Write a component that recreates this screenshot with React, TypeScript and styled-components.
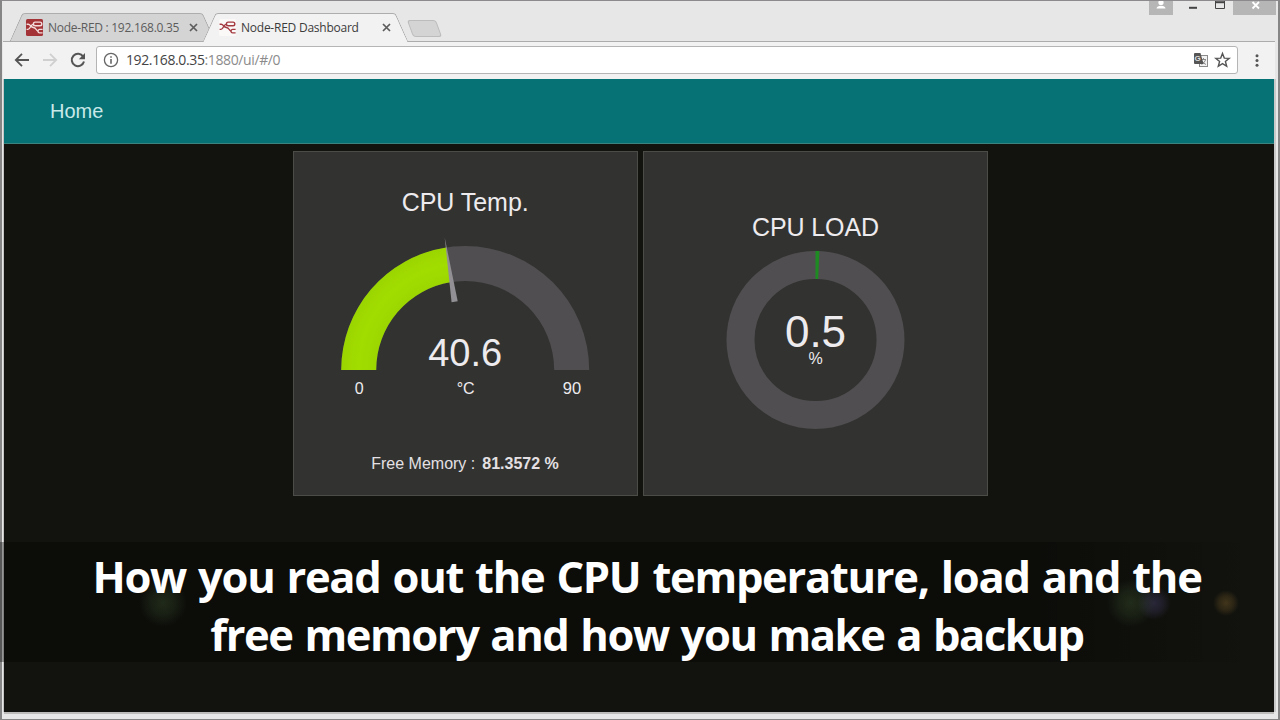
import React, { FC } from "react";
import styled, { createGlobalStyle, css } from "styled-components";

const GlobalStyle = createGlobalStyle`
  * {
    box-sizing: border-box;
  }
  body {
    margin: 0;
    overflow: hidden;
    background: #e7e7e7;
  }
`;

const arial = `"Liberation Sans", Arial, sans-serif`;
const segoe = `"Open Sans", "Segoe UI", sans-serif`;

const Window = styled.div`
  position: relative;
  display: flex;
  flex-direction: column;
  width: 1280px;
  height: 720px;
  background: #e7e7e7;
  border-top: 1px solid #8c8a8c;
  border-bottom: 1px solid #858585;
  border-left: 2px solid #858585;
  border-right: 2px solid #858585;
  font-family: ${segoe};
`;

const TitleBar = styled.div`
  display: flex;
  height: 40px;
  flex: none;
  padding-left: 14px;
`;

const Tabs = styled.div`
  display: flex;
  align-items: flex-end;
  flex-grow: 1;
`;

const tabSide = css<{ $active?: boolean }>`
  content: "";
  position: absolute;
  top: 0;
  bottom: ${props => (props.$active ? "-1px" : "0")};
  z-index: -1;
  width: 60%;
  background: ${props => (props.$active ? "#f2f2f2" : "#d4d4d4")};
  border-top: 1px solid #adadad;
`;

const Tab = styled.div<{ $active?: boolean }>`
  position: relative;
  z-index: ${props => (props.$active ? 2 : 1)};
  display: flex;
  align-items: center;
  flex: none;
  width: 193px;
  height: 28px;
  padding: 0 11px 0 10px;
  color: ${props => (props.$active ? "#3c3c3c" : "#5c5c5c")};
  font-size: 12px;

  &::before {
    ${tabSide}
    left: 0;
    border-left: 1px solid #a4a4a4;
    border-top-left-radius: 3px;
    transform: skewX(-24deg);
  }
  &::after {
    ${tabSide}
    right: 0;
    border-right: 1px solid #a4a4a4;
    border-top-right-radius: 3px;
    transform: skewX(24deg);
  }
`;

const TabTitle = styled.span<{ $spacing: number }>`
  flex-grow: 1;
  margin-left: 5px;
  white-space: nowrap;
  letter-spacing: ${props => props.$spacing}px;
`;

const NewTab = styled.div`
  width: 29px;
  height: 17px;
  margin: 0 0 4px 8px;
  background: #d4d4d4;
  border: 1px solid #bcbcbc;
  border-radius: 3px;
  transform: skewX(20deg);
`;

const Controls = styled.div`
  display: flex;
  height: 14px;
  margin-right: 2px;
`;

const Control = styled.div<{ $width: number; $filled?: boolean }>`
  width: ${props => props.$width}px;
  height: 14px;
  background: ${props => (props.$filled ? "#b7b6b6" : "transparent")};
  svg {
    display: block;
  }
`;

const Toolbar = styled.div`
  display: flex;
  align-items: center;
  flex: none;
  height: 38px;
  margin: 0 3px 0 1px;
  padding: 0 8px 2px 10px;
  background: #f2f2f2;
  border-top: 1px solid #acacac;
`;

const NavButton = styled.div`
  width: 28px;
  height: 18px;
`;

const AddressBar = styled.div`
  display: flex;
  align-items: center;
  width: 1142px;
  height: 28px;
  margin: 0 10px 0 -1px;
  padding: 0 6px;
  background: #fff;
  border: 1px solid #b5b5b5;
  border-radius: 3px;
`;

const Url = styled.div`
  flex-grow: 1;
  margin-left: 7px;
  color: #8b8b8b;
  font-size: 14px;
  letter-spacing: -0.38px;
  b {
    color: #444;
    font-weight: 400;
  }
`;

const Page = styled.div`
  display: flex;
  flex-direction: column;
  height: 633px;
  margin: 0 4px 0 2px;
  background: #12130e;
  box-shadow: 0 2px 0 #bdbcbb, 2px 0 0 #c9c9c9, -1px 0 0 #c4c4c4;
  font-family: ${arial};
`;

const Header = styled.div`
  display: flex;
  align-items: center;
  flex: none;
  height: 65px;
  padding-left: 46px;
  background: #067276;
  border-bottom: 1px solid #3c827f;
  color: #c9e9e8;
  font-size: 20px;
`;

const Cards = styled.div`
  display: flex;
  gap: 5px;
  padding: 7px 0 0 289px;
`;

const Card = styled.div`
  width: 345px;
  height: 345px;
  background: #323330;
  border: 1px solid #4b4c48;
  svg {
    display: block;
  }
`;

const GaugeText = styled.text`
  fill: #eeebee;
  text-anchor: middle;
  font-family: ${arial};
`;

const MemoryRow = styled.div`
  display: flex;
  justify-content: center;
  gap: 7px;
  margin-top: 21px;
  padding-right: 1px;
  color: #e4e0e4;
  font-size: 16px;
  line-height: 20px;
  white-space: nowrap;
`;

const Caption = styled.div`
  position: absolute;
  left: -2px;
  top: 541px;
  z-index: 5;
  display: flex;
  flex-direction: column;
  align-items: center;
  width: 1280px;
  height: 120px;
  padding: 5px 0 0 14px;
  background:
    radial-gradient(circle at 163px 61px, rgba(52, 72, 42, 0.5), rgba(52, 72, 42, 0.3) 12px, transparent 24px),
    radial-gradient(circle at 1131px 61px, rgba(52, 72, 42, 0.5), rgba(52, 72, 42, 0.3) 12px, transparent 24px),
    radial-gradient(circle at 1154px 61px, rgba(58, 54, 88, 0.6), rgba(58, 54, 88, 0.35) 9px, transparent 17px),
    radial-gradient(circle at 1226px 61px, rgba(98, 76, 36, 0.6), rgba(98, 76, 36, 0.35) 7px, transparent 13px),
    linear-gradient(to right, rgba(0, 0, 0, 0.35) 1030px, transparent 1258px);
`;

const CaptionLine = styled.div<{ $spacing: number }>`
  height: 58px;
  line-height: 59px;
  color: #fff;
  font-size: 43.5px;
  font-weight: 700;
  white-space: nowrap;
  word-spacing: 2px;
  letter-spacing: ${props => props.$spacing}px;
`;

// point on a circle, angle in degrees counted clockwise from the left
const polar = (cx: number, cy: number, r: number, deg: number) => {
  const a = (deg * Math.PI) / 180;
  return `${cx - r * Math.cos(a)} ${cy - r * Math.sin(a)}`;
};

const arc = (cx: number, cy: number, outer: number, inner: number, from: number, to: number) =>
  `M${polar(cx, cy, outer, from)}A${outer} ${outer} 0 0 1 ${polar(cx, cy, outer, to)}` +
  `L${polar(cx, cy, inner, to)}A${inner} ${inner} 0 0 0 ${polar(cx, cy, inner, from)}Z`;

interface NodeRedIconProps {
  filled?: boolean;
}

const NodeRedIcon: FC<NodeRedIconProps> = ({ filled }) => (
  <svg width="17" height="17" viewBox="0 0 17 17">
    <rect width="17" height="17" rx="1.5" fill={filled ? "#a33336" : "#fbf8f8"} />
    <g fill="none" stroke={filled ? "#f4dcdc" : "#a33a40"} strokeWidth="1.4">
      <rect x="7.4" y="3.1" width="8.4" height="3.7" rx="1.8" />
      <path d="M0.6 5.3H2.2C4.3 5.3 4.8 8.2 7.4 8.5C10.6 8.9 9.8 11.6 12 12" />
      <path d="M0.6 10.4H2C4.5 10.4 4.3 5.4 7.4 5.1" />
      <path d="M16.6 10.4H13.6Q12 10.6 12 12.2Q12.1 13.9 13.6 13.9H16.6" />
    </g>
  </svg>
);

const TabClose: FC = () => (
  <svg width="9" height="9" viewBox="0 0 9 9">
    <path d="M1 1L8 8M8 1L1 8" stroke="#5c5c5c" strokeWidth="1.7" />
  </svg>
);

const TempGauge: FC = () => {
  const cx = 171.2;
  const cy = 218;
  const angle = (40.6 / 90) * 180;
  return (
    <svg width="343" height="281" viewBox="0 0 343 281">
      <defs>
        <radialGradient id="lime" gradientUnits="userSpaceOnUse" cx={cx} cy={cy} r="124">
          <stop offset="0.72" stopColor="#9bd600" />
          <stop offset="0.86" stopColor="#a2dd00" />
          <stop offset="1" stopColor="#9bd500" />
        </radialGradient>
      </defs>
      <GaugeText x={cx} y="58.5" fontSize="25" textLength="127">CPU Temp.</GaugeText>
      <path d={arc(cx, cy, 124, 89, 0, 180)} fill="#504e50" />
      <path d={arc(cx, cy, 124, 89, 0, angle)} fill="url(#lime)" />
      <path
        d={`M${cx - 134} ${cy}L${cx - 69} ${cy - 3.1}V${cy + 3.1}Z`}
        transform={`rotate(${angle} ${cx} ${cy})`}
        fill="#929094"
      />
      <GaugeText x={cx} y="214" fontSize="38">40.6</GaugeText>
      <GaugeText x="65.2" y="242" fontSize="16">0</GaugeText>
      <GaugeText x={cx + 0.5} y="242" fontSize="16">°C</GaugeText>
      <GaugeText x="278" y="242" fontSize="16.5">90</GaugeText>
    </svg>
  );
};

const LoadGauge: FC = () => (
  <svg width="343" height="300" viewBox="0 0 343 300">
    <GaugeText x="171.5" y="84" fontSize="25" textLength="127">CPU LOAD</GaugeText>
    <circle cx="171.5" cy="188" r="75" fill="none" stroke="#504e50" strokeWidth="28" />
    <path d={arc(171.5, 188, 89, 61, 90, 92.5)} fill="#1d8a22" />
    <GaugeText x="171.5" y="195" fontSize="44">0.5</GaugeText>
    <GaugeText x="171.5" y="212" fontSize="16">%</GaugeText>
  </svg>
);

export const App: FC = () => {
  return (
    <>
      <GlobalStyle />
      <Window>
        <TitleBar>
          <Tabs>
            <Tab>
              <NodeRedIcon filled />
              <TabTitle $spacing={-0.28}>Node-RED : 192.168.0.35</TabTitle>
              <TabClose />
            </Tab>
            <Tab $active>
              <NodeRedIcon />
              <TabTitle $spacing={-0.24}>Node-RED Dashboard</TabTitle>
              <TabClose />
            </Tab>
            <NewTab />
          </Tabs>
          <Controls>
            <Control $width={24} $filled>
              <svg width="24" height="14">
                <circle cx="12" cy="1.5" r="2.6" fill="#fff" />
                <path d="M7.5 7.5Q8 4.8 12 4.8T16.5 7.5Z" fill="#fff" />
              </svg>
            </Control>
            <Control $width={30}>
              <svg width="30" height="14">
                <path d="M16 6.8H24" stroke="#444" strokeWidth="2" />
              </svg>
            </Control>
            <Control $width={30}>
              <svg width="30" height="14">
                <path d="M12.5 0V7.5H21.5V0" fill="none" stroke="#444" />
                <path d="M12 1.2H22" stroke="#444" strokeWidth="2" />
              </svg>
            </Control>
            <Control $width={43} $filled>
              <svg width="43" height="14">
                <path d="M19.5 1L26 7.5M26 1L19.5 7.5" stroke="#fff" strokeWidth="1.8" />
              </svg>
            </Control>
          </Controls>
        </TitleBar>
        <Toolbar>
          <NavButton>
            <svg width="18" height="18" fill="none" stroke="#555" strokeWidth="1.8">
              <path d="M16 9H3M9 2.8L2.8 9L9 15.2" />
            </svg>
          </NavButton>
          <NavButton>
            <svg width="18" height="18" fill="none" stroke="#d0d0d0" strokeWidth="1.8">
              <path d="M2 9H15M9 2.8L15.2 9L9 15.2" />
            </svg>
          </NavButton>
          <NavButton>
            <svg width="18" height="18">
              <path d="M14.2 5.6A6.2 6.2 0 1 0 15 10.6" fill="none" stroke="#555" strokeWidth="2" />
              <path d="M16 2V8.2H9.8Z" fill="#555" />
            </svg>
          </NavButton>
          <AddressBar>
            <svg width="16" height="16">
              <circle cx="8" cy="8" r="6.6" fill="none" stroke="#666" strokeWidth="1.3" />
              <path d="M8 7V11.7M8 4.2V5.8" stroke="#666" strokeWidth="1.6" />
            </svg>
            <Url>
              <b>192.168.0.35</b>:1880/ui/#/0
            </Url>
            <svg width="20" height="16" fontFamily="Liberation Sans" fontWeight="700">
              <rect x="6.5" y="3.5" width="8" height="11" fill="#f2f2f2" stroke="#8a8a8a" />
              <path d="M8 7.5H13M10.5 6V7.5M12.5 8Q11.5 11 8.5 12.5M9 9Q10.5 11.5 13 12.5" fill="none" stroke="#8a8a8a" />
              <path d="M2 1H7.5L10.5 12H2Q1 12 1 11V2Q1 1 2 1Z" fill="#555" />
              <text x="1.6" y="9.3" fontSize="8" fill="#ddd">G</text>
            </svg>
            <svg width="18" height="16" viewBox="-3 0 18 16" overflow="visible">
              <path
                d="M6.5 1.5L8.3 6.1L13.2 6.4L9.4 9.5L10.7 14.3L6.5 11.6L2.3 14.3L3.6 9.5L-0.2 6.4L4.7 6.1Z"
                fill="none"
                stroke="#555"
                strokeWidth="1.4"
              />
            </svg>
          </AddressBar>
          <svg width="18" height="16" fill="#555">
            <circle cx="9" cy="3.7" r="1.5" />
            <circle cx="9" cy="8.5" r="1.5" />
            <circle cx="9" cy="13.3" r="1.5" />
          </svg>
        </Toolbar>
        <Page>
          <Header>Home</Header>
          <Cards>
            <Card>
              <TempGauge />
              <MemoryRow>
                <span>Free Memory :</span>
                <b>81.3572 %</b>
              </MemoryRow>
            </Card>
            <Card>
              <LoadGauge />
            </Card>
          </Cards>
        </Page>
        <Caption>
          <CaptionLine $spacing={-1.29}>How you read out the CPU temperature, load and the</CaptionLine>
          <CaptionLine $spacing={-1.43}>free memory and how you make a backup</CaptionLine>
        </Caption>
      </Window>
    </>
  );
};

export default App;
